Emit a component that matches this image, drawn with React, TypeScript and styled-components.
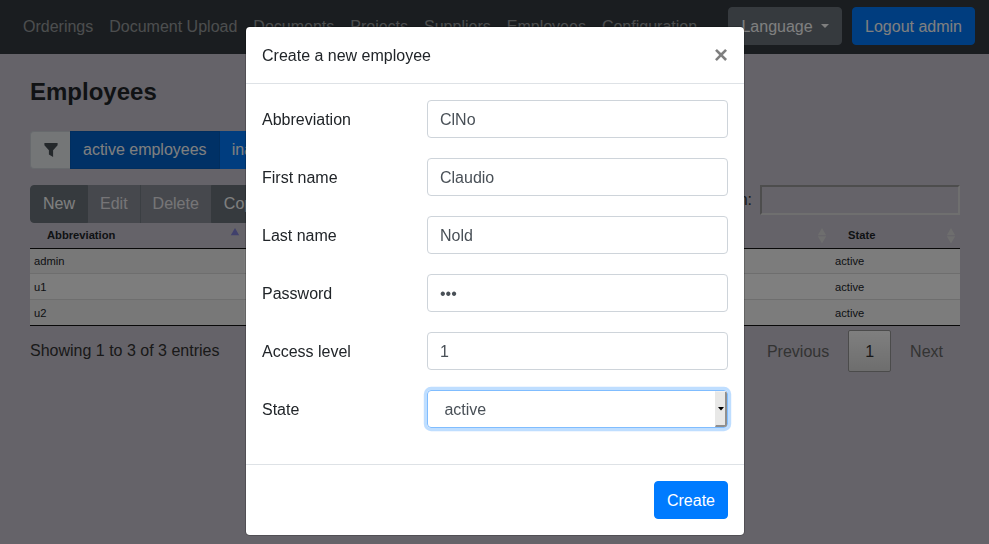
import React from 'react';
import styled, { createGlobalStyle, css } from 'styled-components';

const GlobalStyle = createGlobalStyle`
  *, *::before, *::after { box-sizing: border-box; }
  html, body { height: 100%; }
  body {
    margin: 0;
    overflow: hidden;
    background: #cac6d2;
    color: #212529;
    font: 400 16px/24px "Liberation Sans", Arial, sans-serif;
  }
  button, input, select { font: inherit; margin: 0; }
`;

const Navbar = styled.nav`
  display: flex;
  align-items: center;
  height: 54px;
  padding: 0 14px 0 15px;
  background: #343a40;
`;

const NavLinks = styled.div`
  display: flex;
  flex: 1;
`;

const NavLink = styled.a`
  padding: 8px;
  white-space: nowrap;
  color: rgba(255, 255, 255, 0.5);
`;

const NavActions = styled.div`
  display: flex;
  gap: 10.4px;
  margin-bottom: 2px;
`;

type Tone = 'primary' | 'pressed' | 'secondary';

const tones = {
  primary: css`background: #007bff; border-color: #007bff;`,
  pressed: css`background: #0062cc; border-color: #005cbf; z-index: 1;`,
  secondary: css`background: #6c757d; border-color: #6c757d;`,
};

const Button = styled.button<{ $tone: Tone }>`
  height: 38px;
  padding: 6px 12px;
  border: 1px solid;
  border-radius: 4px;
  color: #fff;
  line-height: 24px;
  white-space: nowrap;
  ${({ $tone }) => tones[$tone]}
  &:disabled { opacity: 0.65; }
`;

const ActionButton = styled(Button)`
  padding: 7px 12px 5px;
`;

const Caret = styled.span`
  display: inline-block;
  margin-left: 8px;
  vertical-align: 4px;
  border: 4.8px solid transparent;
  border-top-color: currentColor;
  border-bottom: 0;
`;

const Page = styled.main`
  padding: 23px 29px 0 30px;
`;

const Title = styled.h1`
  margin: 0;
  font-size: 24px;
  line-height: 29px;
`;

const ButtonGroup = styled.div`
  display: flex;
  & > button + button { margin-left: -1px; }
  & > button:not(:last-child) { border-top-right-radius: 0; border-bottom-right-radius: 0; }
  & > button:not(:first-child) { border-top-left-radius: 0; border-bottom-left-radius: 0; }
`;

const FilterBar = styled.div`
  display: flex;
  margin-top: 25px;
  & > div > button:first-child { border-top-left-radius: 0; border-bottom-left-radius: 0; }
`;

const FilterIcon = styled.span`
  display: flex;
  align-items: center;
  justify-content: center;
  width: 40px;
  height: 38px;
  padding-left: 1px;
  background: #e9ecef;
  border: 1px solid #ced4da;
  border-right: 0;
  border-radius: 4px 0 0 4px;
  color: #495057;
`;

const Toolbar = styled.div`
  display: flex;
  justify-content: space-between;
  height: 38px;
  margin-top: 16px;
`;

const Search = styled.label`
  display: flex;
  gap: 8px;
  height: 30px;
  line-height: 30px;
  color: #333;
`;

const SearchInput = styled.input`
  width: 200px;
  height: 30px;
  background: transparent;
  border: 2px solid;
  border-color: #9a9a9a #dedede #dedede #9a9a9a;
`;

const Table = styled.div`
  width: 930px;
  border-bottom: 1px solid #111;
  font-size: 11.2px;
`;

const columnTracks = css`
  display: grid;
  grid-template-columns: 214px 195px 196px 196px 129px;
  grid-template-rows: 100%;
`;

const HeadRow = styled.div`
  ${columnTracks}
  height: 26px;
  border-bottom: 1px solid #111;
`;

const HeadCell = styled.div`
  display: flex;
  justify-content: space-between;
  padding: 0 4.5px 0 17px;
  font-weight: 700;
  line-height: 24px;
`;

const Row = styled.div<{ $odd?: boolean }>`
  ${columnTracks}
  height: 24px;
  line-height: 24px;
  background: ${({ $odd }) => ($odd ? '#f9f9f9' : '#fff')};
  & + & {
    height: 26px;
    line-height: 26px;
    border-top: 1px solid #ddd;
  }
`;

const Cell = styled.div<{ $sorted?: boolean; $odd?: boolean }>`
  padding: 0 4px;
  background: ${({ $sorted, $odd }) => ($sorted ? ($odd ? '#f1f1f1' : '#fafafa') : 'transparent')};
`;

const TableFooter = styled.div`
  display: flex;
  justify-content: space-between;
  width: 930px;
  padding-top: 4px;
  color: #333;
`;

const Info = styled.div`
  padding-top: 9px;
`;

const Pager = styled.div`
  display: flex;
  gap: 2px;
`;

const PageButton = styled.a<{ $current?: boolean }>`
  height: 42px;
  padding: 9px 16px 7px;
  border: 1px solid transparent;
  border-radius: 2px;
  color: #666;
  ${({ $current }) =>
    $current &&
    css`
      color: #333;
      border-color: #979797;
      background: linear-gradient(#fff, #dcdcdc);
    `}
`;

const Backdrop = styled.div`
  position: fixed;
  inset: 0;
  z-index: 10;
  display: flex;
  align-items: flex-start;
  padding: 26px 0 0 245px;
  background: rgba(0, 0, 0, 0.5);
`;

const Dialog = styled.section`
  width: 500px;
  background: #fff;
  background-clip: padding-box;
  border: 1px solid rgba(0, 0, 0, 0.2);
  border-radius: 4.8px;
`;

const DialogHeader = styled.header`
  display: flex;
  justify-content: space-between;
  height: 57px;
  padding: 16px;
  border-bottom: 1px solid #dee2e6;
`;

const DialogTitle = styled.h2`
  margin: 0;
  padding-top: 1px;
  font-size: 16px;
  font-weight: 400;
  line-height: 24px;
`;

const Close = styled.button`
  height: 24px;
  padding: 0;
  border: 0;
  background: none;
  color: #000;
  opacity: 0.5;
  font-size: 24px;
  font-weight: 700;
  line-height: 24px;
`;

const DialogBody = styled.form`
  display: grid;
  gap: 20px;
  padding: 16px 16px 36px;
`;

const Field = styled.div`
  display: grid;
  grid-template-columns: 165px 301px;
  align-items: center;
`;

const FieldLabel = styled.label`
  padding-top: 2px;
`;

const TextInput = styled.input`
  height: 38px;
  padding: 7px 12px 5px;
  color: #495057;
  background: #fff;
  border: 1px solid #ced4da;
  border-radius: 4px;
  outline: 0;
`;

const SelectBox = styled.div`
  display: flex;
  justify-content: space-between;
  height: 38px;
  padding-left: 16.4px;
  color: #495057;
  line-height: 38px;
  border: 1px solid #80bdff;
  border-radius: 4px;
  box-shadow: 0 0 0 3.2px rgba(0, 123, 255, 0.25);
  overflow: hidden;
`;

const SelectArrow = styled.span`
  display: flex;
  align-items: center;
  justify-content: center;
  width: 12px;
  background: #e8e8e7;
  border: solid;
  border-width: 1px 2px 2px 1px;
  border-color: #f1f1f1 #8f8f8f #8f8f8f #e8e8e7;
`;

const DialogFooter = styled.footer`
  display: flex;
  justify-content: flex-end;
  padding: 16px;
  border-top: 1px solid #dee2e6;
`;

const links = ['Orderings', 'Document Upload', 'Documents', 'Projects', 'Suppliers', 'Employees', 'Configuration'];
const columns = ['Abbreviation', 'First name', 'Last name', 'Access level', 'State'];
const rows = [
  ['admin', '', '', '', 'active'],
  ['u1', '', '', '', 'active'],
  ['u2', '', '', '', 'active'],
];
const fields = [
  { label: 'Abbreviation', value: 'ClNo' },
  { label: 'First name', value: 'Claudio' },
  { label: 'Last name', value: 'Nold' },
  { label: 'Password', value: 'abc', type: 'password' },
  { label: 'Access level', value: '1' },
];

const SortIcon = ({ sorted }: { sorted?: boolean }) => (
  <svg width="10" height="24" viewBox="0 0 10 24">
    {sorted ? (
      <path d="M0.8 12.3 5 5l4.2 7.3z" fill="#8080d8" />
    ) : (
      <path d="M0.8 12.3 5 5l4.2 7.3zM0.8 13.3h8.4L5 20.6z" fill="#dcdcdc" />
    )}
  </svg>
);

export default function App() {
  return (
    <>
      <GlobalStyle />
      <Navbar>
        <NavLinks>
          {links.map((link) => (
            <NavLink key={link}>{link}</NavLink>
          ))}
        </NavLinks>
        <NavActions>
          <ActionButton $tone="secondary">
            Language
            <Caret />
          </ActionButton>
          <ActionButton $tone="primary">Logout admin</ActionButton>
        </NavActions>
      </Navbar>

      <Page>
        <Title>Employees</Title>
        <FilterBar>
          <FilterIcon>
            <svg width="14" height="14" viewBox="0 0 14 14">
              <path d="M0.4 0h13.2v2.2L9.1 7.2V14L4.9 11.5V7.2L0.4 2.2z" fill="currentColor" />
            </svg>
          </FilterIcon>
          <ButtonGroup>
            <Button $tone="pressed">active employees</Button>
            <Button $tone="primary">inactive employees</Button>
          </ButtonGroup>
        </FilterBar>
        <Toolbar>
          <ButtonGroup>
            <Button $tone="secondary">New</Button>
            <Button $tone="secondary" disabled>Edit</Button>
            <Button $tone="secondary" disabled>Delete</Button>
            <Button $tone="secondary">Copy</Button>
          </ButtonGroup>
          <Search>
            Search:
            <SearchInput />
          </Search>
        </Toolbar>
        <Table>
          <HeadRow>
            {columns.map((column, i) => (
              <HeadCell key={column}>
                {column}
                <SortIcon sorted={i === 0} />
              </HeadCell>
            ))}
          </HeadRow>
          {rows.map((row, r) => (
            <Row key={row[0]} $odd={r % 2 === 0}>
              {row.map((value, c) => (
                <Cell key={c} $sorted={c === 0} $odd={r % 2 === 0}>{value}</Cell>
              ))}
            </Row>
          ))}
        </Table>
        <TableFooter>
          <Info>Showing 1 to 3 of 3 entries</Info>
          <Pager>
            <PageButton>Previous</PageButton>
            <PageButton $current>1</PageButton>
            <PageButton>Next</PageButton>
          </Pager>
        </TableFooter>
      </Page>

      <Backdrop>
        <Dialog role="dialog">
          <DialogHeader>
            <DialogTitle>Create a new employee</DialogTitle>
            <Close aria-label="Close">×</Close>
          </DialogHeader>
          <DialogBody>
            {fields.map(({ label, value, type }) => (
              <Field key={label}>
                <FieldLabel>{label}</FieldLabel>
                <TextInput type={type ?? 'text'} defaultValue={value} />
              </Field>
            ))}
            <Field>
              <FieldLabel>State</FieldLabel>
              <SelectBox>
                active
                <SelectArrow>
                  <svg width="6" height="4" viewBox="0 0 6 4">
                    <path d="M0 0h6L3 3.5z" fill="#000" />
                  </svg>
                </SelectArrow>
              </SelectBox>
            </Field>
          </DialogBody>
          <DialogFooter>
            <ActionButton $tone="primary">Create</ActionButton>
          </DialogFooter>
        </Dialog>
      </Backdrop>
    </>
  );
}
